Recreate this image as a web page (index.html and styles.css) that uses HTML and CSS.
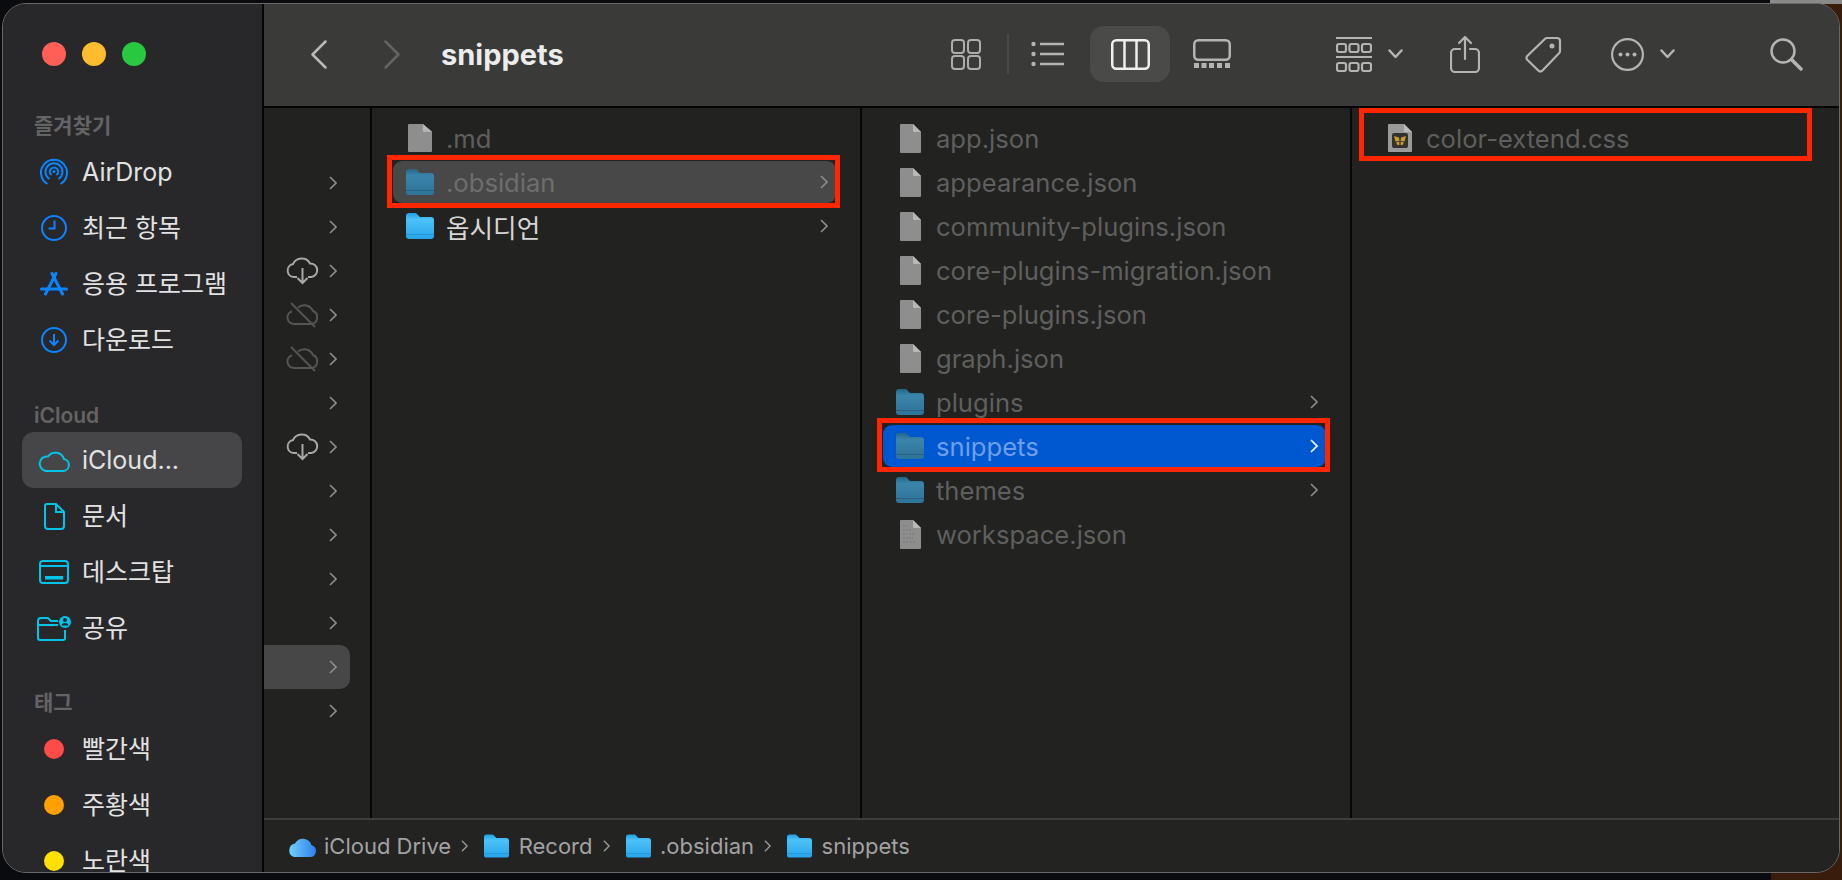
FILE: index.html
```html
<!DOCTYPE html>
<html lang="ko">
<head>
    <meta charset="UTF-8">
    <title>snippets</title>
    <link rel="stylesheet" href="styles.css">
</head>
<body>
    <!-- shared icons -->
    <svg class="defs" width="0" height="0">
        <defs>
            <linearGradient id="grad-bright" x1="0" y1="0" x2="0" y2="1">
                <stop offset="0" stop-color="#1f9fe6"/>
                <stop offset="0.25" stop-color="#4cc2f8"/>
                <stop offset="1" stop-color="#28a4ea"/>
            </linearGradient>
            <linearGradient id="grad-dim" x1="0" y1="0" x2="0" y2="1">
                <stop offset="0" stop-color="#25658a"/>
                <stop offset="0.25" stop-color="#3a84aa"/>
                <stop offset="1" stop-color="#2f7398"/>
            </linearGradient>
            <linearGradient id="grad-cloud" x1="0" y1="0" x2="1" y2="0">
                <stop offset="0" stop-color="#6fd0f8"/>
                <stop offset="1" stop-color="#2f7ff0"/>
            </linearGradient>
            <symbol id="folder-bright" viewBox="0 0 28 26">
                <path d="M0 3a3 3 0 0 1 3-3h7l4 4h11a3 3 0 0 1 3 3v16a3 3 0 0 1-3 3H3a3 3 0 0 1-3-3z" fill="url(#grad-bright)"/>
                <path d="M0 21h28v1H0z" fill="#1a88cc" opacity=".6"/>
            </symbol>
            <symbol id="folder-dim" viewBox="0 0 28 26">
                <path d="M0 3a3 3 0 0 1 3-3h7l4 4h11a3 3 0 0 1 3 3v16a3 3 0 0 1-3 3H3a3 3 0 0 1-3-3z" fill="url(#grad-dim)"/>
                <path d="M0 21h28v1H0z" fill="#1f5676" opacity=".7"/>
            </symbol>
            <symbol id="file" viewBox="0 0 21 29" preserveAspectRatio="none">
                <path d="M0 1a1 1 0 0 1 1-1h12l8 8v20a1 1 0 0 1-1 1H1a1 1 0 0 1-1-1z" fill="#8e8e8e"/>
                <path d="M13 0l8 8h-7a1 1 0 0 1-1-1z" fill="#b8b8b8"/>
            </symbol>
            <symbol id="chev" viewBox="0 0 8 14">
                <path d="M1 1l6 6-6 6" fill="none" stroke="currentColor" stroke-width="1.6"/>
            </symbol>
            <symbol id="cloud-down" viewBox="0 0 33 28">
                <path d="M11 20H8a6.500 6.500 0 0 1-1-12.900A9.500 9.500 0 0 1 24 6.500 6.800 6.800 0 0 1 25.500 20H22" fill="none" stroke="currentColor" stroke-width="2"/>
                <path d="M16.500 11v15M11.500 21l5 5 5-5" fill="none" stroke="currentColor" stroke-width="2"/>
            </symbol>
            <symbol id="cloud-off" viewBox="0 0 33 26">
                <path d="M8 22a6.500 6.500 0 0 1-2-12.700M12 5.500A9.500 9.500 0 0 1 27 9a6.800 6.800 0 0 1-1.500 13H8" fill="none" stroke="currentColor" stroke-width="2"/>
                <path d="M5 1l24 24" fill="none" stroke="currentColor" stroke-width="2"/>
            </symbol>
        </defs>
    </svg>

    <div class="window">
        <aside class="sidebar">
            <div class="lights">
                <span class="light red"></span>
                <span class="light yellow"></span>
                <span class="light green"></span>
            </div>

            <div class="side-head">즐겨찾기</div>
            <div class="side-item">
                <span class="side-icon blue">
                    <svg width="28" height="28" viewBox="0 0 28 28" fill="none" stroke="currentColor" stroke-width="2">
                        <path d="M7.500 26A13 13 0 1 1 20.500 26"/>
                        <path d="M9.500 21A8.500 8.500 0 1 1 18.500 21"/>
                        <path d="M11.500 17A4.200 4.200 0 1 1 16.500 17"/>
                        <circle cx="14" cy="13.500" r="1.500" fill="currentColor" stroke="none"/>
                    </svg>
                </span>
                <span>AirDrop</span>
            </div>
            <div class="side-item">
                <span class="side-icon blue">
                    <svg width="26" height="26" viewBox="0 0 26 26" fill="none" stroke="currentColor" stroke-width="2">
                        <circle cx="13" cy="13" r="12"/>
                        <path d="M13.500 5.500v8H7.500"/>
                    </svg>
                </span>
                <span>최근 항목</span>
            </div>
            <div class="side-item">
                <span class="side-icon blue">
                    <svg width="28" height="24" viewBox="0 0 28 24" fill="none" stroke="currentColor" stroke-width="3" stroke-linecap="round">
                        <path d="M12 1.500L22.500 22"/>
                        <path d="M16 1.500L5.500 22"/>
                        <path d="M1.500 17H26.500"/>
                    </svg>
                </span>
                <span>응용 프로그램</span>
            </div>
            <div class="side-item">
                <span class="side-icon blue">
                    <svg width="26" height="26" viewBox="0 0 26 26" fill="none" stroke="currentColor" stroke-width="2">
                        <circle cx="13" cy="13" r="12"/>
                        <path d="M13 7v11M8.500 13.500L13 18l4.500-4.500"/>
                    </svg>
                </span>
                <span>다운로드</span>
            </div>

            <div class="side-head group">iCloud</div>
            <div class="side-item active">
                <span class="side-icon cyan">
                    <svg width="32" height="23" viewBox="0 0 32 23" fill="none" stroke="currentColor" stroke-width="2">
                        <path d="M8 22h17a6 6 0 0 0 1-11.900A9 9 0 0 0 10 7.500 7.200 7.200 0 0 0 8 22z"/>
                    </svg>
                </span>
                <span>iCloud...</span>
            </div>
            <div class="side-item">
                <span class="side-icon cyan">
                    <svg width="21" height="27" viewBox="0 0 21 27" fill="none" stroke="currentColor" stroke-width="2">
                        <path d="M3 1h9l8 8v14a3 3 0 0 1-3 3H4a3 3 0 0 1-3-3V3a2 2 0 0 1 2-2z"/>
                        <path d="M12 1v8h8"/>
                    </svg>
                </span>
                <span>문서</span>
            </div>
            <div class="side-item">
                <span class="side-icon cyan">
                    <svg width="30" height="24" viewBox="0 0 30 24" fill="none" stroke="currentColor" stroke-width="2">
                        <rect x="1" y="1" width="28" height="22" rx="3"/>
                        <path d="M1 6h28"/>
                        <rect x="6" y="16" width="18" height="3.500" fill="currentColor" stroke="none"/>
                    </svg>
                </span>
                <span>데스크탑</span>
            </div>
            <div class="side-item">
                <span class="side-icon cyan">
                    <svg width="34" height="25" viewBox="0 0 34 25" fill="none" stroke="currentColor" stroke-width="2">
                        <path d="M1 5a3 3 0 0 1 3-3h7l3 3h7M1 9h20M28 14v8a2 2 0 0 1-2 2H3a2 2 0 0 1-2-2V5"/>
                        <circle cx="28" cy="6" r="6" fill="currentColor" stroke="none"/>
                        <circle cx="28" cy="4" r="2" fill="#28282b" stroke="none"/>
                        <path d="M24.500 9.500a3.500 2.500 0 0 1 7 0z" fill="#28282b" stroke="none"/>
                    </svg>
                </span>
                <span>공유</span>
            </div>

            <div class="side-head group tags">태그</div>
            <div class="side-item">
                <span class="side-icon"><span class="dot tag-red"></span></span>
                <span>빨간색</span>
            </div>
            <div class="side-item">
                <span class="side-icon"><span class="dot tag-orange"></span></span>
                <span>주황색</span>
            </div>
            <div class="side-item last">
                <span class="side-icon"><span class="dot tag-yellow"></span></span>
                <span>노란색</span>
            </div>
        </aside>

        <main class="main">
            <header class="toolbar">
                <svg class="tb-back" width="16" height="29" viewBox="0 0 16 29" fill="none" stroke="#b9b9b7" stroke-width="2.500" stroke-linecap="round" stroke-linejoin="round">
                    <path d="M14.500 1.500L1.500 14.500l13 13"/>
                </svg>
                <svg class="tb-forward" width="16" height="29" viewBox="0 0 16 29" fill="none" stroke="#646462" stroke-width="2.500" stroke-linecap="round" stroke-linejoin="round">
                    <path d="M1.500 1.500l13 13-13 13"/>
                </svg>
                <div class="title">snippets</div>

                <svg width="30" height="31" viewBox="0 0 30 31" fill="none" stroke="#adadab" stroke-width="2">
                    <rect x="1" y="1" width="12" height="13" rx="3"/>
                    <rect x="17" y="1" width="12" height="13" rx="3"/>
                    <rect x="1" y="17" width="12" height="13" rx="3"/>
                    <rect x="17" y="17" width="12" height="13" rx="3"/>
                </svg>
                <span class="tb-sep"></span>
                <svg class="tb-list" width="34" height="30" viewBox="0 0 34 30" fill="none" stroke="#b4b4b2" stroke-width="2.500">
                    <path d="M9 5h24M9 15h24M9 25h24"/>
                    <g fill="#b4b4b2" stroke="none">
                        <circle cx="2.500" cy="5" r="2.200"/>
                        <circle cx="2.500" cy="15" r="2.200"/>
                        <circle cx="2.500" cy="25" r="2.200"/>
                    </g>
                </svg>
                <span class="tb-active">
                    <svg width="39" height="31" viewBox="0 0 39 31" fill="none" stroke="#efefef" stroke-width="2.500">
                        <rect x="1.250" y="1.250" width="36.500" height="28.500" rx="4"/>
                        <path d="M13.500 1v29M25.500 1v29"/>
                    </svg>
                </span>
                <svg class="tb-gallery" width="38" height="30" viewBox="0 0 38 30" fill="none" stroke="#b4b4b2" stroke-width="2.500">
                    <rect x="1.250" y="1.250" width="35.500" height="19.500" rx="4"/>
                    <g fill="#b4b4b2" stroke="none">
                        <rect x="1" y="24" width="5" height="5"/>
                        <rect x="8.500" y="24" width="5" height="5"/>
                        <rect x="16" y="24" width="5" height="5"/>
                        <rect x="24" y="24" width="5" height="5"/>
                        <rect x="32" y="24" width="5" height="5"/>
                    </g>
                </svg>
                <svg class="tb-group" width="36" height="35" viewBox="0 0 36 35" fill="none" stroke="#b4b4b2" stroke-width="2.200">
                    <path d="M0 1h36M0 20h36"/>
                    <rect x="1" y="7" width="9" height="8" rx="2"/>
                    <rect x="13.500" y="7" width="9" height="8" rx="2"/>
                    <rect x="26" y="7" width="9" height="8" rx="2"/>
                    <rect x="1" y="26" width="9" height="8" rx="2"/>
                    <rect x="13.500" y="26" width="9" height="8" rx="2"/>
                    <rect x="26" y="26" width="9" height="8" rx="2"/>
                </svg>
                <svg class="tb-caret" width="15" height="10" viewBox="0 0 15 10" fill="none" stroke="#b4b4b2" stroke-width="2.500" stroke-linecap="round" stroke-linejoin="round">
                    <path d="M1.500 1.500l6 6.500 6-6.500"/>
                </svg>
                <svg class="tb-share" width="30" height="38" viewBox="0 0 30 38" fill="none" stroke="#b4b4b2" stroke-width="2.200" stroke-linecap="round" stroke-linejoin="round">
                    <path d="M15 2v22M9 8l6-6 6 6"/>
                    <path d="M10 14H5a4 4 0 0 0-4 4v15a4 4 0 0 0 4 4h20a4 4 0 0 0 4-4V18a4 4 0 0 0-4-4h-5"/>
                </svg>
                <svg class="tb-tag" width="37" height="37" viewBox="0 0 37 37" fill="none" stroke="#b4b4b2" stroke-width="2.200">
                    <path d="M22 2h10a3 3 0 0 1 3 3v10a3 3 0 0 1-1 2.200L17.500 34.500a3 3 0 0 1-4.200 0L2.500 24a3 3 0 0 1 0-4.200L19.800 3a3 3 0 0 1 2.200-1z"/>
                    <circle cx="27" cy="10" r="2.500" fill="#b4b4b2" stroke="none"/>
                </svg>
                <svg class="tb-more" width="33" height="33" viewBox="0 0 33 33" fill="none" stroke="#b4b4b2" stroke-width="2.200">
                    <circle cx="16.500" cy="16.500" r="15.400"/>
                    <g fill="#b4b4b2" stroke="none">
                        <circle cx="9.500" cy="16.500" r="2"/>
                        <circle cx="16.500" cy="16.500" r="2"/>
                        <circle cx="23.500" cy="16.500" r="2"/>
                    </g>
                </svg>
                <svg class="tb-caret" width="15" height="10" viewBox="0 0 15 10" fill="none" stroke="#b4b4b2" stroke-width="2.500" stroke-linecap="round" stroke-linejoin="round">
                    <path d="M1.500 1.500l6 6.500 6-6.500"/>
                </svg>
                <svg class="tb-search" width="33" height="33" viewBox="0 0 33 33" fill="none" stroke="#b4b4b2">
                    <circle cx="13" cy="13" r="11.500" stroke-width="2.500"/>
                    <path d="M21.500 21.500L31 31" stroke-width="3.500" stroke-linecap="round"/>
                </svg>
            </header>

            <div class="columns">
                <div class="col col-first">
                    <div class="stub"><svg class="chev"><use href="#chev"/></svg></div>
                    <div class="stub"><svg class="chev"><use href="#chev"/></svg></div>
                    <div class="stub"><svg class="cloud"><use href="#cloud-down"/></svg><svg class="chev"><use href="#chev"/></svg></div>
                    <div class="stub"><svg class="cloud off"><use href="#cloud-off"/></svg><svg class="chev"><use href="#chev"/></svg></div>
                    <div class="stub"><svg class="cloud off"><use href="#cloud-off"/></svg><svg class="chev"><use href="#chev"/></svg></div>
                    <div class="stub"><svg class="chev"><use href="#chev"/></svg></div>
                    <div class="stub"><svg class="cloud"><use href="#cloud-down"/></svg><svg class="chev"><use href="#chev"/></svg></div>
                    <div class="stub"><svg class="chev"><use href="#chev"/></svg></div>
                    <div class="stub"><svg class="chev"><use href="#chev"/></svg></div>
                    <div class="stub"><svg class="chev"><use href="#chev"/></svg></div>
                    <div class="stub"><svg class="chev"><use href="#chev"/></svg></div>
                    <div class="stub selected"><svg class="chev"><use href="#chev"/></svg></div>
                    <div class="stub"><svg class="chev"><use href="#chev"/></svg></div>
                </div>

                <div class="col">
                    <div class="row dim"><span class="slot"><svg class="file wide"><use href="#file"/></svg></span>.md</div>
                    <div class="row dim inactive-sel"><span class="slot"><svg class="folder"><use href="#folder-dim"/></svg></span>.obsidian<svg class="chev"><use href="#chev"/></svg></div>
                    <div class="row"><span class="slot"><svg class="folder"><use href="#folder-bright"/></svg></span>옵시디언<svg class="chev"><use href="#chev"/></svg></div>
                </div>

                <div class="col">
                    <div class="row dim"><span class="slot"><svg class="file"><use href="#file"/></svg></span>app.json</div>
                    <div class="row dim"><span class="slot"><svg class="file"><use href="#file"/></svg></span>appearance.json</div>
                    <div class="row dim"><span class="slot"><svg class="file"><use href="#file"/></svg></span>community-plugins.json</div>
                    <div class="row dim"><span class="slot"><svg class="file"><use href="#file"/></svg></span>core-plugins-migration.json</div>
                    <div class="row dim"><span class="slot"><svg class="file"><use href="#file"/></svg></span>core-plugins.json</div>
                    <div class="row dim"><span class="slot"><svg class="file"><use href="#file"/></svg></span>graph.json</div>
                    <div class="row dim"><span class="slot"><svg class="folder"><use href="#folder-dim"/></svg></span>plugins<svg class="chev"><use href="#chev"/></svg></div>
                    <div class="row active-sel"><span class="slot"><svg class="folder"><use href="#folder-dim"/></svg></span>snippets<svg class="chev"><use href="#chev"/></svg></div>
                    <div class="row dim"><span class="slot"><svg class="folder"><use href="#folder-dim"/></svg></span>themes<svg class="chev"><use href="#chev"/></svg></div>
                    <div class="row dim">
                        <span class="slot">
                            <svg class="file" viewBox="0 0 21 29">
                                <use href="#file" width="21" height="29"/>
                                <path d="M3 6h6M3 10h8M3 14h4M9 14h6M3 18h10M3 22h5M10 22h6" stroke="#777777" stroke-width="1" stroke-dasharray="2 1"/>
                            </svg>
                        </span>workspace.json
                    </div>
                </div>

                <div class="col col-last">
                    <div class="row dim">
                        <span class="slot">
                            <svg class="file wide" viewBox="0 0 24 28">
                                <path d="M0 1a1 1 0 0 1 1-1h15l8 8v19a1 1 0 0 1-1 1H1a1 1 0 0 1-1-1z" fill="#9a9a9a"/>
                                <path d="M16 0l8 8h-7a1 1 0 0 1-1-1z" fill="#bcbcbc"/>
                                <rect x="4" y="9" width="16" height="15" rx="2" fill="#34322e"/>
                                <path d="M6 12l5 1.500.5 3.500-4 .5zM18 12l-5 1.500-.5 3.500 4 .5zM8 18.500l3.300-.8.200 3-2 .5zM16 18.500l-3.300-.8-.200 3 2 .5z" fill="#c79c2e"/>
                            </svg>
                        </span>color-extend.css
                    </div>
                </div>
            </div>

            <footer class="pathbar">
                <svg width="28" height="21" viewBox="0 0 28 21"><path d="M6 21h16a6 6 0 0 0 1.500-11.800A9 9 0 0 0 7 7.500 7 7 0 0 0 6 21z" fill="url(#grad-cloud)"/></svg>
                <span class="crumb first">iCloud Drive</span>
                <svg class="sep"><use href="#chev"/></svg>
                <svg class="crumb-folder"><use href="#folder-bright"/></svg>
                <span class="crumb">Record</span>
                <svg class="sep"><use href="#chev"/></svg>
                <svg class="crumb-folder"><use href="#folder-bright"/></svg>
                <span class="crumb">.obsidian</span>
                <svg class="sep"><use href="#chev"/></svg>
                <svg class="crumb-folder"><use href="#folder-bright"/></svg>
                <span class="crumb">snippets</span>
            </footer>
        </main>

        <div class="mark mark-a"></div>
        <div class="mark mark-b"></div>
        <div class="mark mark-c"></div>
    </div>
</body>
</html>
```

FILE: styles.css
```css
html, body {
    margin: 0;
    height: 100%;
    overflow: hidden;
}
body {
    /* whatever is behind the window: grey and brown at the right-hand corners */
    background:
        linear-gradient(#8a8a8a, #8a8a8a) 100% 0 / 72px 4px no-repeat,
        linear-gradient(#3a1c0c, #3a1c0c) 100% 100% / 71px 100% no-repeat,
        #0a0b0e;
    font-family: Inter, "Noto Sans CJK KR", sans-serif;
}
.defs {
    position: absolute;
}
.window {
    position: relative;
    box-sizing: border-box;
    width: 1838px;
    height: 870px;
    margin: 3px 0 0 2px;
    display: flex;
    overflow: hidden;
    border: 1px solid #686868;
    border-radius: 24px;
    background-color: #222220;
}

/* sidebar */
.sidebar {
    flex: 0 0 259px;
    background-color: #28282b;
    border-right: 2px solid #060606;
}
.lights {
    display: flex;
    gap: 16px;
    height: 104px;
    padding: 38px 0 0 39px;
    box-sizing: border-box;
}
.light {
    width: 24px;
    height: 24px;
    border-radius: 50%;
}
.red { background-color: #ff5f57; }
.yellow { background-color: #febc2e; }
.green { background-color: #28c840; }
.side-head {
    height: 36px;
    line-height: 36px;
    padding-left: 31px;
    font-size: 21px;
    font-weight: 600;
    color: #646464;
}
.side-head.group {
    margin-top: 28px;
    line-height: 40px;
}
.side-head.tags {
    margin-top: 29px;
    line-height: 36px;
}
.side-item {
    display: flex;
    align-items: center;
    height: 56px;
    margin: 0 20px 0 19px;
    padding-left: 14px;
    border-radius: 12px;
    font-size: 25px;
    line-height: 20px;
    color: #e2e2e2;
}
.side-item.active {
    background-color: #464648;
}
/* the window cuts this row off, so keep it inside the bottom edge */
.side-item.last {
    box-sizing: border-box;
    height: 38px;
    padding-top: 18px;
}
.side-icon {
    display: flex;
    justify-content: center;
    align-items: center;
    width: 36px;
    margin-right: 10px;
}
.blue { color: #0a84ff; }
.cyan { color: #00c4e8; }
.dot {
    width: 20px;
    height: 20px;
    border-radius: 50%;
}
.tag-red { background-color: #ff4b47; }
.tag-orange { background-color: #ff9f00; }
.tag-yellow { background-color: #ffe000; }

/* toolbar */
.main {
    flex: 1;
    min-width: 0;
    display: flex;
    flex-direction: column;
}
.toolbar {
    flex: 0 0 104px;
    box-sizing: border-box;
    display: flex;
    align-items: center;
    padding: 0 36px 2px 47px;
    background-color: #3a3a38;
    border-bottom: 2px solid #060606;
}
.tb-forward { margin-left: 57px; }
.title {
    flex: 1;
    margin-left: 41px;
    font-size: 29px;
    font-weight: 700;
    color: #ececec;
}
.tb-sep {
    width: 2px;
    height: 40px;
    margin-left: 26px;
    background-color: #4a4a48;
}
.tb-list { margin-left: 22px; }
.tb-active {
    display: flex;
    justify-content: center;
    align-items: center;
    width: 80px;
    height: 56px;
    margin-left: 25px;
    border-radius: 14px;
    background-color: #4a4a48;
}
.tb-gallery { margin-left: 23px; }
.tb-group { margin-left: 105px; }
.tb-caret { margin-left: 16px; }
.tb-share { margin-left: 47px; }
.tb-tag { margin-left: 45px; }
.tb-more { margin-left: 49px; }
.tb-search { margin-left: 95px; }

/* columns */
.columns {
    flex: 1;
    min-height: 0;
    display: flex;
}
.col {
    box-sizing: border-box;
    flex: 0 0 490px;
    padding-top: 9px;
    border-right: 2px solid #060606;
}
.col-first {
    flex-basis: 108px;
    padding-top: 53px;
}
.col-last {
    flex: 1;
    border-right: none;
}
.stub {
    display: flex;
    justify-content: flex-end;
    align-items: center;
    width: 86px;
    height: 44px;
    padding-right: 13px;
    box-sizing: border-box;
}
.stub.selected {
    background-color: #474747;
    border-radius: 0 10px 10px 0;
}
.chev {
    width: 8px;
    height: 14px;
    color: #8c8c8c;
}
.cloud {
    width: 33px;
    height: 28px;
    margin-right: 10px;
    color: #a8a8a8;
}
.cloud.off {
    height: 26px;
    color: #555555;
}
.row {
    display: flex;
    align-items: center;
    height: 42px;
    margin: 0 24px 2px 21px;
    padding: 0 8px 0 13px;
    border-radius: 9px;
    font-size: 25.6px;
    color: #d6d6d6;
}
.row.dim {
    color: #5f5f5f;
}
.row .chev {
    margin-left: auto;
}
.slot {
    display: flex;
    justify-content: center;
    align-items: center;
    width: 28px;
    margin-right: 12px;
}
.folder {
    width: 28px;
    height: 26px;
}
.file {
    width: 21px;
    height: 29px;
}
.file.wide {
    width: 24px;
    height: 28px;
}
.row.inactive-sel {
    background-color: #484848;
    color: #6e6e6e;
}
.active-sel {
    background-color: #0058d0;
    color: #6f9fea;
}
.active-sel .chev {
    color: #ffffff;
}

/* path bar */
.pathbar {
    flex: 0 0 54px;
    box-sizing: border-box;
    display: flex;
    align-items: center;
    padding-left: 24px;
    background-color: #232322;
    border-top: 2px solid #3e3e3d;
    font-size: 22px;
    color: #a2a2a2;
}
.crumb {
    margin-left: 9.500px;
}
.crumb.first {
    margin-left: 8px;
}
.sep {
    width: 7px;
    height: 12px;
    margin: 0 16px 0 10px;
    color: #9a9a9a;
}
.crumb-folder {
    width: 25px;
    height: 24px;
}

/* red annotation boxes drawn over the screenshot */
.mark {
    position: absolute;
    box-sizing: border-box;
    width: 453px;
    height: 53px;
    border: 5px solid #ff2600;
}
.mark-a { left: 384px; top: 151px; }
.mark-b { left: 874px; top: 414px; height: 54px; }
.mark-c { left: 1356px; top: 104px; }
```
